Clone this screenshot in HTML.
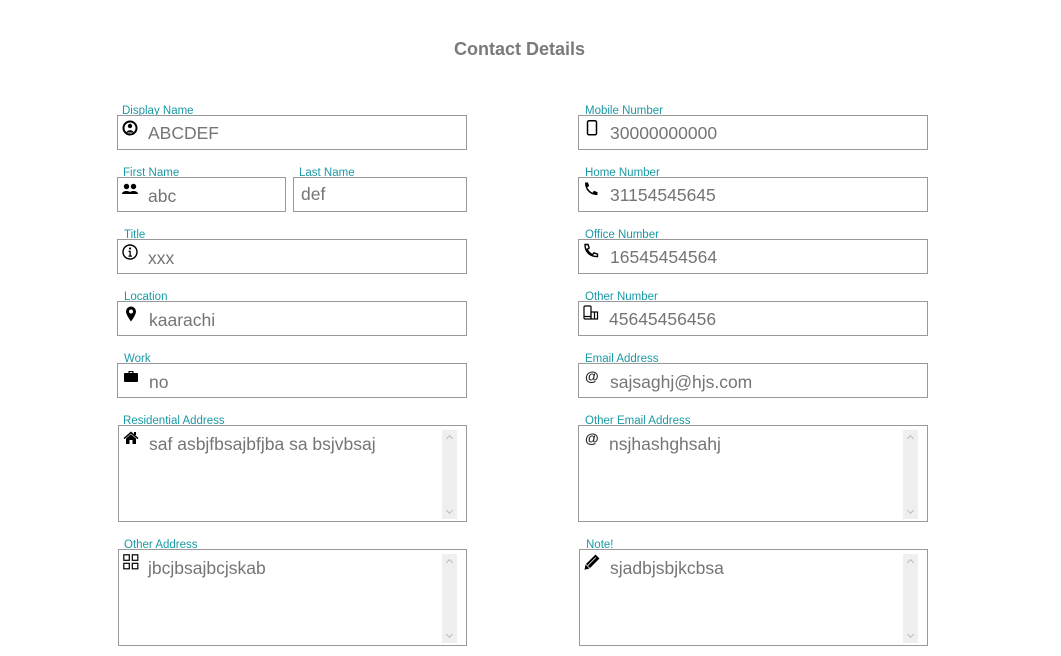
<!DOCTYPE html>
<html><head><meta charset="utf-8"><style>
*{margin:0;padding:0;box-sizing:border-box}
body{width:1061px;height:656px;background:#fff;position:relative;overflow:hidden;font-family:"Liberation Sans",sans-serif}
h1{position:absolute;left:0;width:1039px;top:39px;text-align:center;font-size:18px;font-weight:bold;color:#7a7a7a}
.l{position:absolute;font-size:11.5px;color:#1a9aa5;line-height:12px;margin-top:2px}
.b{position:absolute;border:1px solid #999;background:#fff}
.t{position:absolute;font-size:17.5px;color:#757575;line-height:20px;white-space:nowrap}
.i{position:absolute;width:16px;height:16px}
.sb{position:absolute;width:15px;background:#efefef}
.sb:before,.sb:after{content:"";position:absolute;left:5px;width:4px;height:4px;border-left:1px solid #bbb;border-top:1px solid #bbb}
.sb:before{top:6px;transform:rotate(45deg)}
.sb:after{bottom:6px;transform:rotate(225deg)}
</style></head><body>
<h1>Contact Details</h1>

<div class="l" style="left:122px;top:103px">Display Name</div>
<div class="b" style="left:117px;top:115px;width:350px;height:35px"></div>
<svg class="i" style="left:122px;top:120px" viewBox="0 0 16 16"><circle cx="8" cy="8" r="6.5" fill="none" stroke="#000" stroke-width="2"/><circle cx="8" cy="6" r="2.2"/><path d="M4.5 12.5c0-3 7-3 7 0z"/></svg>
<div class="t" style="left:148px;top:123px">ABCDEF</div>

<div class="l" style="left:123px;top:165px">First Name</div>
<div class="b" style="left:117px;top:177px;width:169px;height:35px"></div>
<svg class="i" style="left:122px;top:182px" viewBox="0 0 16 16"><circle cx="4.5" cy="4.5" r="2.7"/><circle cx="11.5" cy="4.5" r="2.7"/><path d="M0 12c0-4 9-4 9 0zM7 12c0-4 9-4 9 0z"/></svg>
<div class="t" style="left:148px;top:186px">abc</div>

<div class="l" style="left:299px;top:165px">Last Name</div>
<div class="b" style="left:293px;top:177px;width:174px;height:35px"></div>
<div class="t" style="left:301px;top:184px">def</div>

<div class="l" style="left:124px;top:227px">Title</div>
<div class="b" style="left:117px;top:239px;width:350px;height:35px"></div>
<svg class="i" style="left:122px;top:244px" viewBox="0 0 16 16"><circle cx="8" cy="8" r="7" fill="none" stroke="#000" stroke-width="1.4"/><circle cx="8" cy="4.5" r="1.1"/><path d="M6.5 6.8h2.3v4.7h1.2v1.2h-3.5v-1.2h1v-3.5h-1z"/></svg>
<div class="t" style="left:148px;top:248px">xxx</div>

<div class="l" style="left:124px;top:289px">Location</div>
<div class="b" style="left:117px;top:301px;width:350px;height:35px"></div>
<svg class="i" style="left:123px;top:306px" viewBox="0 0 16 16"><path fill-rule="evenodd" d="M8 0.5a5 5 0 0 1 5 5c0 3.5-5 10-5 10s-5-6.5-5-10a5 5 0 0 1 5-5zm0 3a2 2 0 1 0 0 4a2 2 0 1 0 0-4z"/></svg>
<div class="t" style="left:149px;top:310px">kaarachi</div>

<div class="l" style="left:124px;top:351px">Work</div>
<div class="b" style="left:117px;top:363px;width:350px;height:35px"></div>
<svg class="i" style="left:123px;top:368px" viewBox="0 0 16 16"><path d="M5.5 3h5v2h-1.2v-1h-2.6v1h-1.2z"/><rect x="1" y="5" width="14" height="9" rx="1"/></svg>
<div class="t" style="left:149px;top:372px">no</div>

<div class="l" style="left:123px;top:413px">Residential Address</div>
<div class="b" style="left:118px;top:425px;width:349px;height:97px"></div>
<div class="sb" style="left:442px;top:430px;height:89px"></div>
<svg class="i" style="left:123px;top:430px" viewBox="0 0 16 16"><path d="M8 1.5l7.5 6.5-1 1.1-6.5-5.6-6.5 5.6-1-1.1z"/><path d="M3 8.5l5-4.3 5 4.3v5.5h-3.5v-4h-3v4h-3.5z"/><rect x="11" y="2" width="2" height="3"/></svg>
<div class="t" style="left:149px;top:434px">saf asbjfbsajbfjba sa bsjvbsaj</div>

<div class="l" style="left:124px;top:537px">Other Address</div>
<div class="b" style="left:118px;top:549px;width:349px;height:97px"></div>
<div class="sb" style="left:442px;top:554px;height:89px"></div>
<svg class="i" style="left:123px;top:554px" viewBox="0 0 16 16" fill="none" stroke="#000" stroke-width="1.2"><rect x="0.8" y="0.8" width="5.5" height="5.5"/><rect x="9.3" y="0.8" width="5.5" height="5.5"/><rect x="0.8" y="9.3" width="5.5" height="5.5"/><rect x="9.3" y="9.3" width="5.5" height="5.5"/></svg>
<div class="t" style="left:148px;top:558px">jbcjbsajbcjskab</div>

<div class="l" style="left:585px;top:103px">Mobile Number</div>
<div class="b" style="left:578px;top:115px;width:350px;height:35px"></div>
<svg class="i" style="left:584px;top:120px" viewBox="0 0 16 16"><rect x="3.5" y="0.8" width="9" height="14" rx="1.5" fill="none" stroke="#000" stroke-width="1.5"/></svg>
<div class="t" style="left:610px;top:123px">30000000000</div>

<div class="l" style="left:585px;top:165px">Home Number</div>
<div class="b" style="left:578px;top:177px;width:350px;height:35px"></div>
<svg class="i" style="left:583px;top:181px" viewBox="0 0 16 16"><path d="M2 1.5l3 0 1.2 3.5-2 1.3c1 2.3 2.8 4.2 5.3 5.5l1.4-2 3.6 1.3v3c-7.5 0-12.5-5-12.5-12.6z"/></svg>
<div class="t" style="left:610px;top:185px">31154545645</div>

<div class="l" style="left:585px;top:227px">Office Number</div>
<div class="b" style="left:578px;top:239px;width:350px;height:35px"></div>
<svg class="i" style="left:583px;top:243px" viewBox="0 0 16 16" fill="none" stroke="#000" stroke-width="1.4"><path d="M2 1.5l3 0 1.2 3.5-2 1.3c1 2.3 2.8 4.2 5.3 5.5l1.4-2 3.6 1.3v2.5c-7.5 0-12.5-4.5-12.5-12.1z"/></svg>
<div class="t" style="left:610px;top:247px">16545454564</div>

<div class="l" style="left:585px;top:289px">Other Number</div>
<div class="b" style="left:578px;top:301px;width:350px;height:35px"></div>
<svg class="i" style="left:583px;top:305px" viewBox="0 0 16 16" fill="none" stroke="#000" stroke-width="1.2"><rect x="1" y="1" width="7" height="13" rx="1"/><rect x="8" y="7" width="6.5" height="7"/><path d="M1 11.5h7M11.5 7v7"/></svg>
<div class="t" style="left:609px;top:309px">45645456456</div>

<div class="l" style="left:585px;top:351px">Email Address</div>
<div class="b" style="left:578px;top:363px;width:350px;height:35px"></div>
<div class="t" style="left:585px;top:366px;font-size:14px;font-weight:bold;color:#222">@</div>
<div class="t" style="left:610px;top:372px">sajsaghj@hjs.com</div>

<div class="l" style="left:585px;top:413px">Other Email Address</div>
<div class="b" style="left:578px;top:425px;width:350px;height:97px"></div>
<div class="sb" style="left:903px;top:430px;height:89px"></div>
<div class="t" style="left:585px;top:428px;font-size:14px;font-weight:bold;color:#222">@</div>
<div class="t" style="left:609px;top:434px">nsjhashghsahj</div>

<div class="l" style="left:586px;top:537px">Note!</div>
<div class="b" style="left:579px;top:549px;width:349px;height:97px"></div>
<div class="sb" style="left:903px;top:554px;height:89px"></div>
<svg class="i" style="left:584px;top:554px" viewBox="0 0 16 16"><path d="M11.5 0.5l4 4-9.5 9.5-4-4z"/><path d="M1.5 10.5l4 4-5 1.2z"/><path d="M3.8 11.5l8-8" stroke="#fff" stroke-width="0.8"/></svg>
<div class="t" style="left:610px;top:558px">sjadbjsbjkcbsa</div>
</body></html>
